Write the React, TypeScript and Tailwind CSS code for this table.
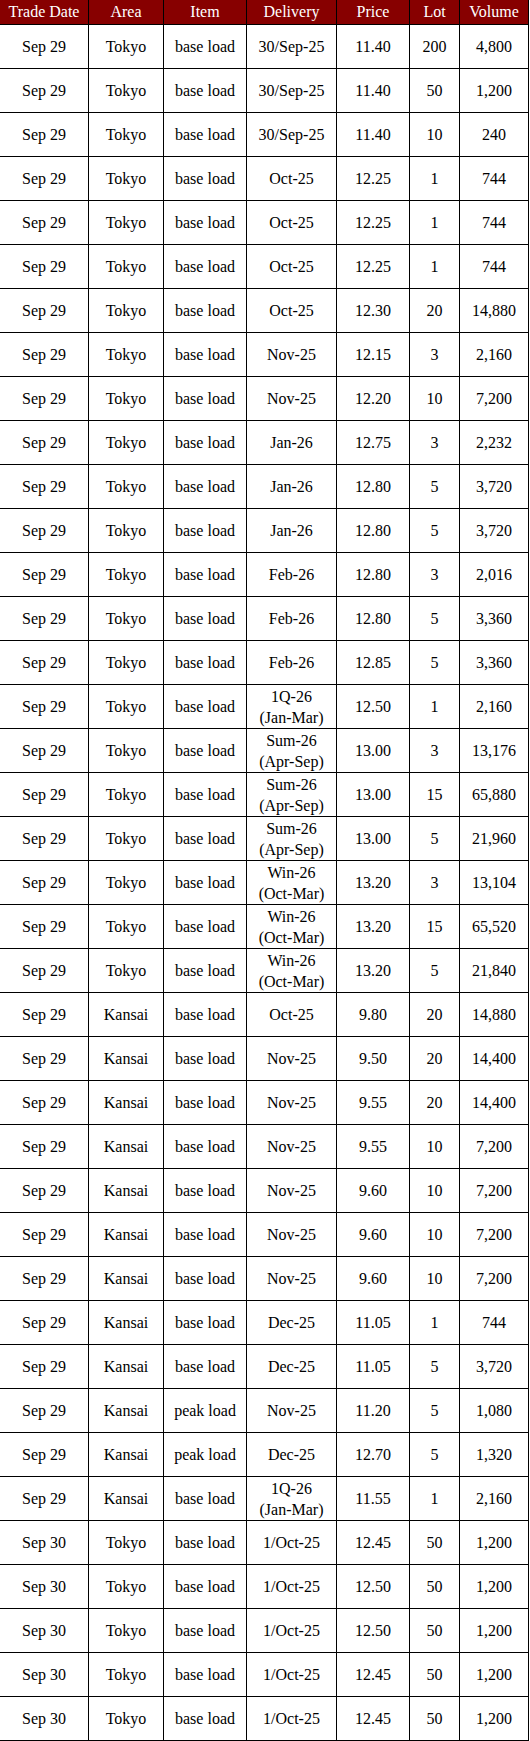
const rows: [string, string, string, string, string, string, string][] = [
  ['Sep 29', 'Tokyo', 'base load', '30/Sep-25', '11.40', '200', '4,800'],
  ['Sep 29', 'Tokyo', 'base load', '30/Sep-25', '11.40', '50', '1,200'],
  ['Sep 29', 'Tokyo', 'base load', '30/Sep-25', '11.40', '10', '240'],
  ['Sep 29', 'Tokyo', 'base load', 'Oct-25', '12.25', '1', '744'],
  ['Sep 29', 'Tokyo', 'base load', 'Oct-25', '12.25', '1', '744'],
  ['Sep 29', 'Tokyo', 'base load', 'Oct-25', '12.25', '1', '744'],
  ['Sep 29', 'Tokyo', 'base load', 'Oct-25', '12.30', '20', '14,880'],
  ['Sep 29', 'Tokyo', 'base load', 'Nov-25', '12.15', '3', '2,160'],
  ['Sep 29', 'Tokyo', 'base load', 'Nov-25', '12.20', '10', '7,200'],
  ['Sep 29', 'Tokyo', 'base load', 'Jan-26', '12.75', '3', '2,232'],
  ['Sep 29', 'Tokyo', 'base load', 'Jan-26', '12.80', '5', '3,720'],
  ['Sep 29', 'Tokyo', 'base load', 'Jan-26', '12.80', '5', '3,720'],
  ['Sep 29', 'Tokyo', 'base load', 'Feb-26', '12.80', '3', '2,016'],
  ['Sep 29', 'Tokyo', 'base load', 'Feb-26', '12.80', '5', '3,360'],
  ['Sep 29', 'Tokyo', 'base load', 'Feb-26', '12.85', '5', '3,360'],
  ['Sep 29', 'Tokyo', 'base load', '1Q-26\n(Jan-Mar)', '12.50', '1', '2,160'],
  ['Sep 29', 'Tokyo', 'base load', 'Sum-26\n(Apr-Sep)', '13.00', '3', '13,176'],
  ['Sep 29', 'Tokyo', 'base load', 'Sum-26\n(Apr-Sep)', '13.00', '15', '65,880'],
  ['Sep 29', 'Tokyo', 'base load', 'Sum-26\n(Apr-Sep)', '13.00', '5', '21,960'],
  ['Sep 29', 'Tokyo', 'base load', 'Win-26\n(Oct-Mar)', '13.20', '3', '13,104'],
  ['Sep 29', 'Tokyo', 'base load', 'Win-26\n(Oct-Mar)', '13.20', '15', '65,520'],
  ['Sep 29', 'Tokyo', 'base load', 'Win-26\n(Oct-Mar)', '13.20', '5', '21,840'],
  ['Sep 29', 'Kansai', 'base load', 'Oct-25', '9.80', '20', '14,880'],
  ['Sep 29', 'Kansai', 'base load', 'Nov-25', '9.50', '20', '14,400'],
  ['Sep 29', 'Kansai', 'base load', 'Nov-25', '9.55', '20', '14,400'],
  ['Sep 29', 'Kansai', 'base load', 'Nov-25', '9.55', '10', '7,200'],
  ['Sep 29', 'Kansai', 'base load', 'Nov-25', '9.60', '10', '7,200'],
  ['Sep 29', 'Kansai', 'base load', 'Nov-25', '9.60', '10', '7,200'],
  ['Sep 29', 'Kansai', 'base load', 'Nov-25', '9.60', '10', '7,200'],
  ['Sep 29', 'Kansai', 'base load', 'Dec-25', '11.05', '1', '744'],
  ['Sep 29', 'Kansai', 'base load', 'Dec-25', '11.05', '5', '3,720'],
  ['Sep 29', 'Kansai', 'peak load', 'Nov-25', '11.20', '5', '1,080'],
  ['Sep 29', 'Kansai', 'peak load', 'Dec-25', '12.70', '5', '1,320'],
  ['Sep 29', 'Kansai', 'base load', '1Q-26\n(Jan-Mar)', '11.55', '1', '2,160'],
  ['Sep 30', 'Tokyo', 'base load', '1/Oct-25', '12.45', '50', '1,200'],
  ['Sep 30', 'Tokyo', 'base load', '1/Oct-25', '12.50', '50', '1,200'],
  ['Sep 30', 'Tokyo', 'base load', '1/Oct-25', '12.50', '50', '1,200'],
  ['Sep 30', 'Tokyo', 'base load', '1/Oct-25', '12.45', '50', '1,200'],
  ['Sep 30', 'Tokyo', 'base load', '1/Oct-25', '12.45', '50', '1,200'],
];

const headers = ['Trade Date', 'Area', 'Item', 'Delivery', 'Price', 'Lot', 'Volume'];

// column widths include the 1px right border
const cols = 'grid grid-cols-[89px_75px_83px_90px_73px_50px_69px]';

export default function App() {
  return (
    <div className="w-[529px] bg-white text-black text-[16px]" style={{ fontFamily: '"Liberation Serif", "Times New Roman", serif' }}>
      <div className={cols}>
        {headers.map((h) => (
          <div key={h} className="h-[25px] flex items-center justify-center bg-[#870000] text-white border-r border-b border-black leading-none whitespace-nowrap">
            {h}
          </div>
        ))}
      </div>
      {rows.map((r, i) => (
        <div key={i} className={cols}>
          {r.map((c, j) => (
            <div key={j} className="h-[44px] flex items-center justify-center text-center border-r border-b border-black leading-[21px] whitespace-pre-line">
              {c}
            </div>
          ))}
        </div>
      ))}
    </div>
  );
}
